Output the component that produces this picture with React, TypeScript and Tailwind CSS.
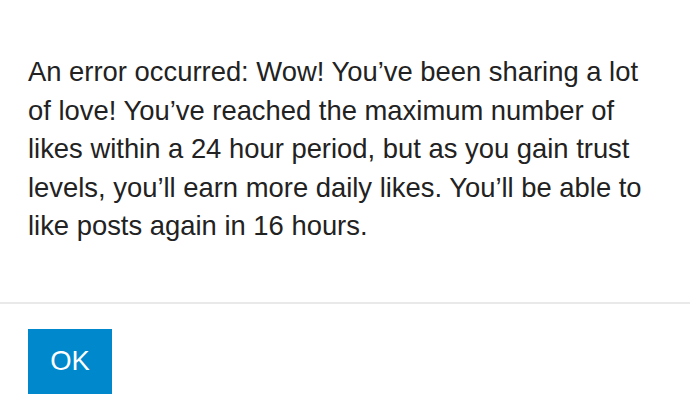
export default function App() {
  return (
    <div className="w-[690px] h-[418px] bg-white overflow-hidden font-['Liberation_Sans'] text-[#222222]">
      <div className="px-[28px] pt-[53px] pb-[56px]">
        <p className="text-[27.4px] leading-[38.5px]">
          An error occurred: Wow! You’ve been sharing a lot of love! You’ve reached the maximum number of likes within a 24 hour period, but as you gain trust levels, you’ll earn more daily likes. You’ll be able to like posts again in 16 hours.
        </p>
      </div>
      <div className="border-t-2 border-[#e9e9e9] px-[28px] pt-[25px]">
        <button className="w-[84px] h-[65px] bg-[#0088cc] text-white text-[27.4px] leading-none">OK</button>
      </div>
    </div>
  )
}
